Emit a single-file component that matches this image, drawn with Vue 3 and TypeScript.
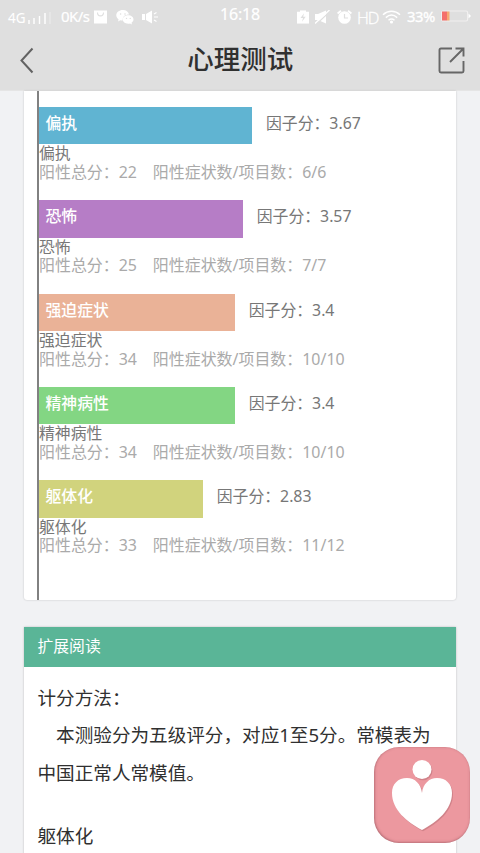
<script setup lang="ts">
interface Factor {
  name: string
  score: string
  total: number
  items: string
  width: number
  color: string
}

const factors: Factor[] = [
  { name: '偏执', score: '3.67', total: 22, items: '6/6', width: 213.3, color: '#60b4d2' },
  { name: '恐怖', score: '3.57', total: 25, items: '7/7', width: 204, color: '#b67dc6' },
  { name: '强迫症状', score: '3.4', total: 34, items: '10/10', width: 196, color: '#eab297' },
  { name: '精神病性', score: '3.4', total: 34, items: '10/10', width: 196, color: '#83d683' },
  { name: '躯体化', score: '2.83', total: 33, items: '11/12', width: 164, color: '#d1d37d' },
]
</script>

<template>
  <div class="screen">
    <header class="header">
      <div class="status">
        <div class="status-left">
          <span class="net">4G</span>
          <svg class="signal" width="26" height="14" viewBox="0 0 26 14">
            <path d="M2 9v4M7 7v6M12.500 5v8M18 2v11" stroke="#fff" stroke-width="1.400" />
            <path d="M23 1v12" stroke="#fff" stroke-opacity=".35" stroke-width="1.300" />
          </svg>
          <span class="speed">0K/s</span>
          <svg class="bag" width="13" height="14" viewBox="0 0 13 14">
            <path d="M0 .5h13v13H0z" fill="#fff" />
            <path d="M3.500 2.500c0 4.500 6 4.500 6 0" fill="none" stroke="#dfdfdf" stroke-width="1.100" />
          </svg>
          <svg class="wechat" width="18" height="16" viewBox="0 0 18 16">
            <path d="M7 1C3 1 .3 3.300.3 6.300c0 1.700.9 3.200 2.300 4.100l-.6 2 2.300-1.200c.7.2 1.600.3 2.400.3C6.500 7.500 9 5.500 13 5.500 12.500 2.800 10.100 1 7 1z" fill="#fff" />
            <path d="M12.200 6.300c-3.100 0-5.400 1.900-5.400 4.200s2.300 4.200 5.400 4.200c.6 0 1.300-.1 1.800-.3l2 1-.5-1.700c1.200-.8 2-1.900 2-3.200 0-2.300-2.300-4.200-5.300-4.200z" fill="#fff" />
            <g fill="#dfdfdf"><circle cx="4.600" cy="5" r=".8" /><circle cx="9" cy="5" r=".8" /><circle cx="10.500" cy="9.400" r=".7" /><circle cx="14.200" cy="9.400" r=".7" /></g>
          </svg>
          <svg class="speaker" width="16" height="14" viewBox="0 0 16 14">
            <path d="M0 4h3v6H0zM4 4l6-3.500v13L4 10z" fill="#fff" />
            <path d="M12 4l2.500-1.500M12 7h4M12 10l2.500 1.500" stroke="#fff" stroke-width="1.100" />
          </svg>
        </div>
        <span class="time">16:18</span>
        <div class="status-right">
          <svg class="charge" width="12" height="14" viewBox="0 0 12 14">
            <path d="M0 1.500h3V0h6v1.500h3V14H0z" fill="#fff" />
            <path d="M7 3L3.500 8H6l-1 4 3.700-5.300H6.200z" fill="#dfdfdf" />
          </svg>
          <svg class="muted" width="15" height="14" viewBox="0 0 15 14">
            <path d="M0 4h3v6H0zM3 4l8-3.500v13L3 10z" fill="#fff" />
            <path d="M1 14.500L15.500 .8" stroke="#dfdfdf" stroke-width="1.300" />
            <path d="M0 13.500L14.500 0" stroke="#fff" stroke-width="1.300" />
          </svg>
          <svg class="alarm" width="15" height="14" viewBox="0 0 15 14">
            <circle cx="7.500" cy="7.500" r="6.300" fill="#fff" />
            <path d="M.6 3.500L4 .7M14.400 3.500L11 .7" stroke="#fff" stroke-width="1.800" />
            <path d="M7.500 4v4h3.500" fill="none" stroke="#dfdfdf" stroke-width="1.200" />
          </svg>
          <span class="hd">HD</span>
          <svg class="wifi" width="19" height="14" viewBox="0 0 19 14">
            <path d="M1 4.800c5-4.600 12-4.600 17 0M3.800 7.600c3.500-3.100 7.900-3.100 11.400 0M6.500 10.200c1.900-1.600 4.100-1.600 6 0" fill="none" stroke="#fff" stroke-width="1.500" />
            <circle cx="9.500" cy="12" r="1.600" fill="#fff" />
          </svg>
          <span class="percent">33%</span>
          <svg class="battery" width="30" height="12" viewBox="0 0 30 12">
            <rect x=".6" y="1" width="26" height="10" rx="1.500" fill="none" stroke="#f2f0f0" stroke-width="1.100" />
            <path d="M27.500 3.500L30 6l-2.500 2.500z" fill="#fff" />
            <path d="M1 1.500h5v9H1z" fill="#f4706c" />
            <path d="M6 1.500h2.500v9H6z" fill="#f8aa72" />
          </svg>
        </div>
      </div>
      <nav class="nav">
        <svg width="14" height="27" viewBox="0 0 14 27">
          <path d="M12.500 1.500L1.500 13.500l11 12" fill="none" stroke="#626262" stroke-width="2" />
        </svg>
        <h1>心理测试</h1>
        <svg width="27" height="27" viewBox="0 0 27 27">
          <path d="M14 1.500H3q-1.500 0-1.500 1.500v21q0 1.500 1.500 1.500h21q1.500 0 1.500-1.500V14M17.500 1.500h8v8M25.500 1.500L12 15" fill="none" stroke="#666" stroke-width="1.900" />
        </svg>
      </nav>
    </header>

    <main class="content">
      <section class="card chart-card">
        <div class="chart">
          <div v-for="f in factors" :key="f.name" class="factor">
            <div class="bar-row">
              <div class="bar" :style="{ width: f.width + 'px', background: f.color }">{{ f.name }}</div>
              <span class="score">因子分：{{ f.score }}</span>
            </div>
            <div class="name">{{ f.name }}</div>
            <div class="detail">阳性总分：{{ f.total }}　阳性症状数/项目数：{{ f.items }}</div>
          </div>
        </div>
      </section>

      <section class="card reading">
        <h2>扩展阅读</h2>
        <div class="article">
          <p>计分方法：</p>
          <p>　本测验分为五级评分，对应1至5分。常模表为中国正常人常模值。</p>
          <p class="next">躯体化</p>
        </div>
      </section>
    </main>

    <button class="float">
      <svg width="96" height="96" viewBox="0 0 96 96">
        <g fill="#9e5b61" opacity=".35" transform="translate(1 1.200)">
          <circle cx="48" cy="22.500" r="9.500" />
          <path d="M48 46C47 37 41 31 33 31c-9 0-15 6-15 15 0 17 15 29 30 37 15-8 30-20 30-37 0-9-6-15-15-15-8 0-14 6-15 15z" />
        </g>
        <g fill="#fff">
          <circle cx="48" cy="22.500" r="9.500" />
          <path d="M48 46C47 37 41 31 33 31c-9 0-15 6-15 15 0 17 15 29 30 37 15-8 30-20 30-37 0-9-6-15-15-15-8 0-14 6-15 15z" />
        </g>
      </svg>
    </button>
  </div>
</template>

<style>
body {
  margin: 0;
  background: #f1f2f4;
}
</style>

<style scoped>
.screen {
  position: relative;
  width: 480px;
  height: 853px;
  overflow: hidden;
  display: flex;
  flex-direction: column;
  background: #f1f2f4;
  font-family: "Noto Sans", "Noto Sans CJK SC", sans-serif;
}
.header {
  height: 91px;
  flex: none;
  box-sizing: border-box;
  background: #dfdfdf;
  border-bottom: 1px solid #e5e5e5;
}
.status {
  height: 31px;
  display: grid;
  grid-template-columns: 220px 70px 190px;
  color: #fff;
  font-size: 15px;
  line-height: 31px;
  white-space: nowrap;
}
.status-left,
.status-right {
  display: flex;
  align-items: center;
}
.status-left {
  padding-left: 8px;
}
.status svg {
  flex: none;
}
.net {
  width: 19px;
  font-size: 13.500px;
  padding-top: 3px;
}
.signal {
  margin-top: 2px;
}
.speed {
  width: 29px;
  height: 31px;
  line-height: 29px;
  margin-left: 8px;
  letter-spacing: -0.600px;
  -webkit-text-stroke: 0.200px #fff;
}
.bag {
  margin-left: 4px;
}
.wechat {
  margin-left: 9px;
}
.speaker {
  margin-left: 8px;
}
.time {
  font-size: 16px;
  line-height: 29px;
  letter-spacing: -0.200px;
  -webkit-text-stroke: 0.200px #fff;
}
.status-right {
  padding-left: 7px;
}
.charge {
  transform: scaleY(0.95);
}
.muted {
  margin-left: 6px;
}
.alarm {
  margin-left: 7px;
}
.hd {
  width: 21px;
  margin-left: 5px;
  font-size: 16.500px;
  letter-spacing: -1.200px;
  font-family: "Open Sans", sans-serif;
  font-weight: 300;
  -webkit-text-stroke: 0.300px #fff;
}
.wifi {
  margin-left: 4px;
}
.percent {
  width: 29px;
  height: 31px;
  line-height: 29px;
  margin-left: 6px;
  font-size: 14.800px;
  letter-spacing: -0.500px;
  -webkit-text-stroke: 0.300px #fff;
}
.battery {
  margin-left: 5px;
  margin-bottom: 2px;
}
.nav {
  height: 59px;
  display: flex;
  align-items: center;
  justify-content: space-between;
  padding: 0 15.500px 0 20px;
}
h1 {
  margin: 0 0 3px 9px;
  color: #303030;
  font-size: 26.500px;
  line-height: 36px;
  font-weight: 500;
}
.content {
  flex: 1;
  padding: 0 24px 0 23.500px;
}
.card {
  box-sizing: border-box;
  background: #fff;
  box-shadow: 0 0 2px rgba(0, 0, 0, 0.22);
}
.chart-card {
  height: 509px;
  padding-left: 13.500px;
  border-radius: 0 0 3px 3px;
}
.chart {
  height: 100%;
  box-sizing: border-box;
  padding-top: 16px;
  border-left: 2px solid #818181;
  font-size: 15.850px;
  line-height: 18.670px;
}
.factor {
  height: 93.330px;
}
.bar-row {
  height: 37.330px;
  display: flex;
  line-height: 32px;
}
.bar {
  flex: none;
  box-sizing: border-box;
  padding-left: 6.500px;
  color: #fff;
  font-weight: 500;
}
.score {
  margin-left: 13.700px;
  color: #777;
}
.name {
  color: #777;
}
.detail {
  color: #aaa;
  font-size: 15.950px;
  line-height: 18px;
  white-space: nowrap;
}
.reading {
  margin-top: 27px;
  height: 260px;
}
h2 {
  margin: 0;
  height: 40px;
  box-sizing: border-box;
  padding-left: 14px;
  background: #5ab597;
  color: #fff;
  font-size: 15.800px;
  line-height: 39px;
  font-weight: 400;
}
.article {
  padding: 12px 13px 0 14px;
  color: #303030;
  font-size: 18.600px;
  line-height: 37.330px;
}
.article p {
  margin: 0;
}
.article .next {
  margin-top: 26.500px;
}
.float {
  position: absolute;
  left: 374px;
  top: 747px;
  width: 96px;
  height: 96px;
  padding: 0;
  border: 0;
  border-radius: 25px;
  background: #ec989f;
  box-shadow: inset 0.500px -0.500px 2.500px rgba(110, 50, 60, 0.55);
}
.float svg {
  display: block;
}
</style>
